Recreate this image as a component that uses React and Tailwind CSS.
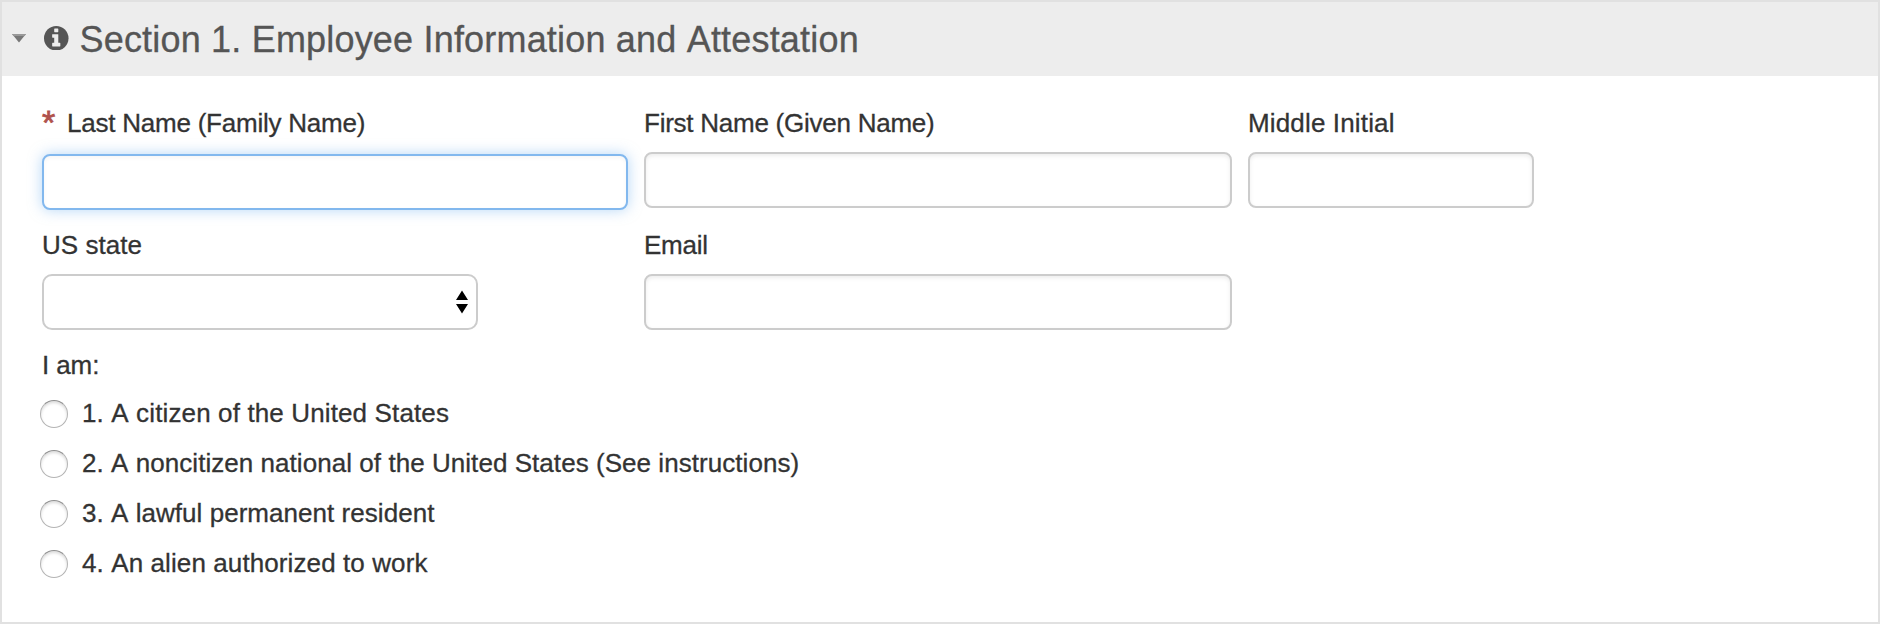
const inputClass =
  "block h-14 rounded-lg border-2 border-[#cccccc] bg-white px-3 text-[26px] outline-none shadow-[inset_0_2px_4px_rgba(0,0,0,0.075)]";

const options = [
  { id: "citizen", text: "1. A citizen of the United States", spacing: "tracking-[0.13px]" },
  { id: "national", text: "2. A noncitizen national of the United States (See instructions)", spacing: "tracking-[0.05px]" },
  { id: "resident", text: "3. A lawful permanent resident", spacing: "tracking-[0.04px]" },
  { id: "alien", text: "4. An alien authorized to work", spacing: "tracking-[0.1px]" },
];

function InfoIcon({ className }) {
  return (
    <svg className={className} viewBox="128 128 1536 1536">
      <circle cx="896" cy="896" r="768" fill="#555555" />
      <path
        fill="#ededed"
        d="M1152 1376v-160q0-14-9-23t-23-9h-96v-512q0-14-9-23t-23-9h-320q-14 0-23 9t-9 23v160q0 14 9 23t23 9h96v320h-96q-14 0-23 9t-9 23v160q0 14 9 23t23 9h448q14 0 23-9t9-23zM1024 480v-160q0-14-9-23t-23-9h-192q-14 0-23 9t-9 23v160q0 14 9 23t23 9h192q14 0 23-9t9-23z"
      />
    </svg>
  );
}

function Label({ htmlFor, className = "", children }) {
  return (
    <label htmlFor={htmlFor} className={`block h-10 whitespace-nowrap leading-10 ${className}`}>
      {children}
    </label>
  );
}

export default function App() {
  return (
    <section className="flex h-[624px] w-[1880px] flex-col border-2 border-[#e1e1e1] bg-white font-['Liberation_Sans',Arial,sans-serif] text-[26px] text-[#333333] [font-kerning:none] [-webkit-text-stroke:0.3px]">
      <header className="flex h-[74px] items-start bg-[#ededed] pl-[10px] text-[#555555]">
        <svg className="mt-[31.5px] h-[9px] w-[14px]" viewBox="0 0 14 9">
          <path d="M0 0h14L7 8.5z" fill="#777777" />
          <path d="M0 0h14l-1.5 2h-11z" fill="#999999" />
        </svg>
        <InfoIcon className="ml-[18px] mt-[23.5px] h-[24.5px] w-[24.5px]" />
        <h2 className="ml-[11px] whitespace-nowrap text-[36px] leading-[76px] tracking-[0.19px]">
          Section 1. Employee Information and Attestation
        </h2>
      </header>

      <form className="flex flex-col px-10 pt-[27px]">
        <div className="flex h-[122px] gap-4">
          <div className="w-[586px]">
            <Label htmlFor="last" className="flex tracking-[-0.23px]">
              <span className="w-[25px] text-[34px] leading-[38px] text-[#b0524c] [-webkit-text-stroke:0.8px]">*</span>
              Last Name (Family Name)
            </Label>
            <input
              id="last"
              className="mt-[11px] block h-14 w-full rounded-lg border-2 border-[#82b8ee] bg-white px-3 outline-none shadow-[inset_0_2px_4px_rgba(0,0,0,0.04),0_0_14px_rgba(110,175,240,0.5)]"
            />
          </div>
          <div className="w-[588px]">
            <Label htmlFor="first" className="tracking-[-0.25px]">First Name (Given Name)</Label>
            <input id="first" className={`${inputClass} mt-[9px] w-full`} />
          </div>
          <div className="w-[286px]">
            <Label htmlFor="middle" className="tracking-[0.15px]">Middle Initial</Label>
            <input id="middle" className={`${inputClass} mt-[9px] w-full`} />
          </div>
        </div>

        <div className="flex h-[120px] gap-4">
          <div className="w-[586px]">
            <Label htmlFor="state" className="tracking-[0.05px]">US state</Label>
            <button
              id="state"
              type="button"
              className="mt-[9px] flex h-14 w-[436px] items-center justify-end rounded-[10px] border-2 border-[#cccccc] bg-white pr-2"
            >
              <svg className="h-6 w-3" viewBox="0 0 12 24" fill="#000000">
                <path d="M6 0.5 12 10H0zM6 23.5 12 14H0z" />
              </svg>
            </button>
          </div>
          <div className="w-[588px]">
            <Label htmlFor="email" className="tracking-[-0.25px]">Email</Label>
            <input id="email" className={`${inputClass} mt-[9px] w-full`} />
          </div>
        </div>

        <fieldset>
          <legend className="block h-[45px] leading-10 tracking-[-0.1px]">I am:</legend>
          {options.map((option) => (
            <label key={option.id} className="-ml-[2px] flex h-[50px] items-start">
              <input
                type="radio"
                name="status"
                className="mt-[10px] h-7 w-7 appearance-none rounded-full border border-[#b4b4b4] border-t-[#8f8f8f] bg-white shadow-[inset_0_2px_3px_rgba(0,0,0,0.14)]"
              />
              <span className={`ml-[14px] whitespace-nowrap leading-[46px] ${option.spacing}`}>{option.text}</span>
            </label>
          ))}
        </fieldset>
      </form>
    </section>
  );
}
